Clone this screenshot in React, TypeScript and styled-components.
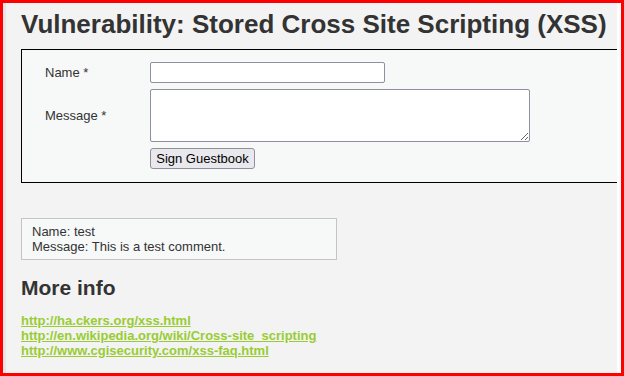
import React from "react";
import styled, { createGlobalStyle } from "styled-components";

const GlobalStyle = createGlobalStyle`
    html, body {
        margin: 0;
        padding: 0;
        background: #fff;
    }
    body {
        font-family: "Liberation Sans", Arial, Helvetica, sans-serif;
        font-size: 13px;
        color: #333;
    }
`;

const Frame = styled.div`
    box-sizing: border-box;
    width: 624px;
    height: 376px;
    border: 3px solid #ff0000;
    overflow: hidden;
`;

const Page = styled.div`
    box-sizing: border-box;
    height: 100%;
    background: #f3f3f3;
    border-left: 3px solid #e6e6e6;
    border-right: 4px solid #ffffff;
    padding: 7px 0 0 15px;
    overflow: hidden;
`;

const Title = styled.h1`
    margin: 0;
    font-size: 26px;
    line-height: 29px;
    font-weight: bold;
    color: #333;
    white-space: nowrap;
`;

const FormBox = styled.div`
    margin-top: 10px;
    box-sizing: border-box;
    width: 620px;
    height: 134px;
    background: #f7f8f8;
    border: 1px solid #000;
    padding: 12px 0 0 23px;
`;

const FormGrid = styled.form`
    display: grid;
    grid-template-columns: 105px auto;
    row-gap: 6px;
    align-items: center;
    margin: 0;
`;

const Label = styled.label`
    font-size: 13px;
    color: #333;
`;

const TextInput = styled.input`
    box-sizing: border-box;
    width: 235px;
    height: 21px;
    margin: 0;
    border: 1px solid #8f8f9d;
    border-radius: 2px;
    background: #fff;
    font: 13px "Liberation Sans", Arial, sans-serif;
    padding: 1px 3px;
`;

const TextArea = styled.textarea`
    box-sizing: border-box;
    width: 380px;
    height: 53px;
    margin: 0;
    border: 1px solid #8f8f9d;
    border-radius: 2px;
    background: #fff;
    font: 13px "Liberation Sans", Arial, sans-serif;
    padding: 2px;
    display: block;
`;

const SubmitButton = styled.button`
    box-sizing: border-box;
    grid-column: 2;
    justify-self: start;
    width: 105px;
    height: 21px;
    padding: 0;
    border: 1px solid #8f8f9d;
    border-radius: 3px;
    background: #e9e9ed;
    color: #000;
    font: 13px "Liberation Sans", Arial, sans-serif;
`;

const Entry = styled.div`
    box-sizing: border-box;
    margin-top: 35px;
    width: 316px;
    border: 1px solid #c4c4c4;
    background: #f7f8f8;
    padding: 5px 10px 5px;
    line-height: 15px;
    color: #333;
`;

const SubTitle = styled.h2`
    margin: 16px 0 0;
    font-size: 21px;
    line-height: 24px;
    font-weight: bold;
    color: #333;
`;

const LinkList = styled.ul`
    list-style: none;
    margin: 13px 0 0;
    padding: 0;
    line-height: 15px;
`;

const InfoLink = styled.a`
    color: #99cc33;
    font-weight: bold;
    text-decoration: underline;
`;

const links = [
    "http://ha.ckers.org/xss.html",
    "http://en.wikipedia.org/wiki/Cross-site_scripting",
    "http://www.cgisecurity.com/xss-faq.html",
];

const App = () => {
    return (
        <Frame>
            <GlobalStyle />
            <Page>
                <Title>Vulnerability: Stored Cross Site Scripting (XSS)</Title>
                <FormBox>
                    <FormGrid onSubmit={(e) => e.preventDefault()}>
                        <Label htmlFor="txtName">Name *</Label>
                        <TextInput id="txtName" type="text" />
                        <Label htmlFor="mtxMessage">Message *</Label>
                        <TextArea id="mtxMessage" />
                        <SubmitButton type="submit">Sign Guestbook</SubmitButton>
                    </FormGrid>
                </FormBox>
                <Entry>
                    Name: test<br />
                    Message: This is a test comment.
                </Entry>
                <SubTitle>More info</SubTitle>
                <LinkList>
                    {links.map((href) => (
                        <li key={href}>
                            <InfoLink href={href}>{href}</InfoLink>
                        </li>
                    ))}
                </LinkList>
            </Page>
        </Frame>
    );
};

export default App;
